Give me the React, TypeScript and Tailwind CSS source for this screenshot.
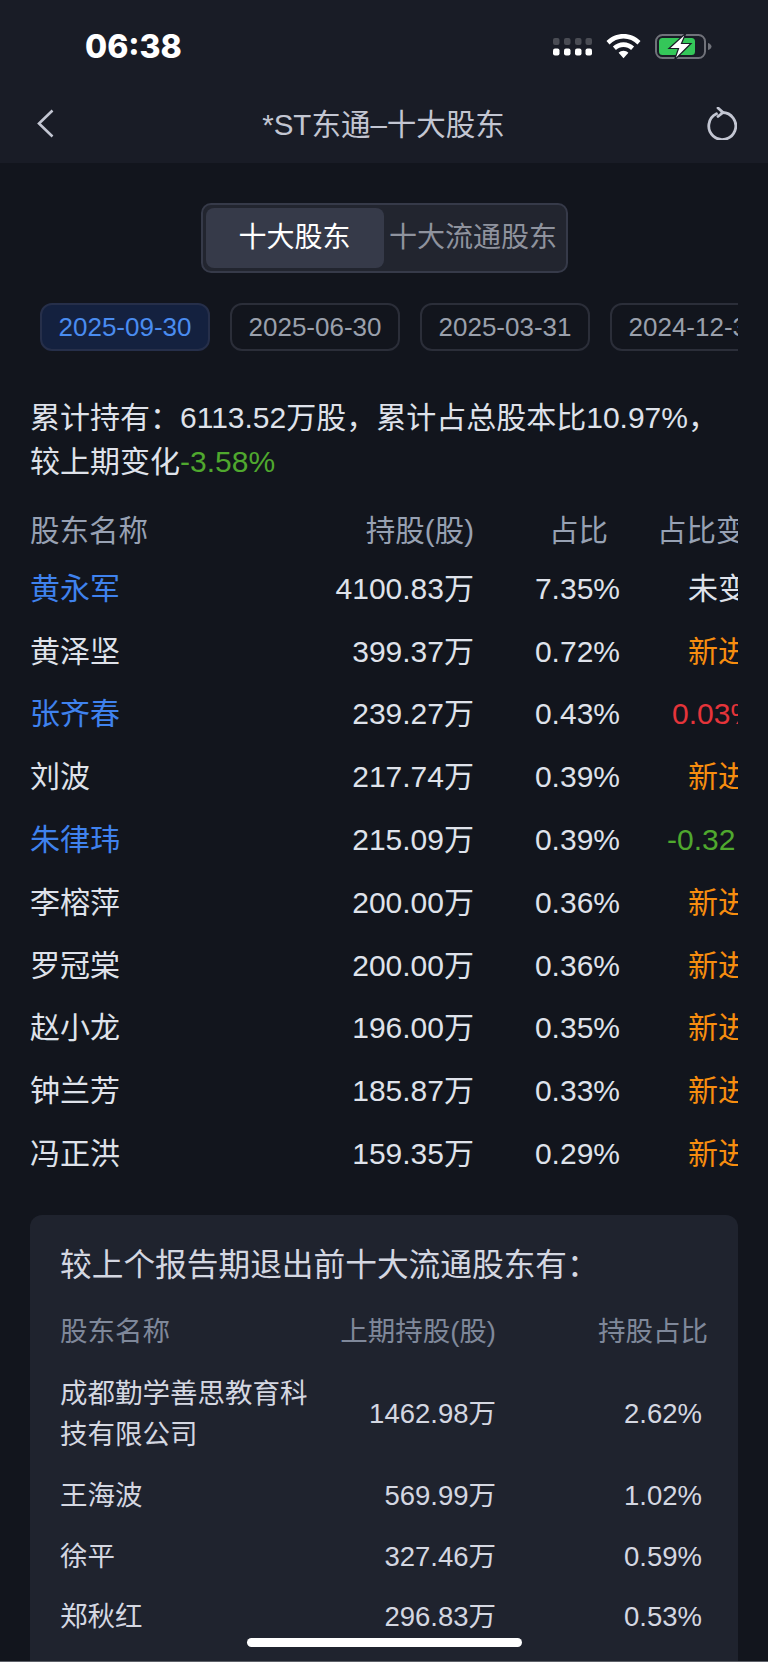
import React from 'react';

const holders = [
  { name: '黄永军', amount: '4100.83万', pct: '7.35%', change: '未变动', link: true, tone: 'text-[#dfe2ea] pl-[68px]' },
  { name: '黄泽坚', amount: '399.37万', pct: '0.72%', change: '新进入', link: false, tone: 'text-[#f78d0f] pl-[68px]' },
  { name: '张齐春', amount: '239.27万', pct: '0.43%', change: '0.03%', link: true, tone: 'text-[#e5343a] pl-[52px]' },
  { name: '刘波', amount: '217.74万', pct: '0.39%', change: '新进入', link: false, tone: 'text-[#f78d0f] pl-[68px]' },
  { name: '朱律玮', amount: '215.09万', pct: '0.39%', change: '-0.32 %', link: true, tone: 'text-[#4fa82e] pl-[47px]' },
  { name: '李榕萍', amount: '200.00万', pct: '0.36%', change: '新进入', link: false, tone: 'text-[#f78d0f] pl-[68px]' },
  { name: '罗冠棠', amount: '200.00万', pct: '0.36%', change: '新进入', link: false, tone: 'text-[#f78d0f] pl-[68px]' },
  { name: '赵小龙', amount: '196.00万', pct: '0.35%', change: '新进入', link: false, tone: 'text-[#f78d0f] pl-[68px]' },
  { name: '钟兰芳', amount: '185.87万', pct: '0.33%', change: '新进入', link: false, tone: 'text-[#f78d0f] pl-[68px]' },
  { name: '冯正洪', amount: '159.35万', pct: '0.29%', change: '新进入', link: false, tone: 'text-[#f78d0f] pl-[68px]' },
];

const exited = [
  { name: '王海波', amount: '569.99万', pct: '1.02%' },
  { name: '徐平', amount: '327.46万', pct: '0.59%' },
  { name: '郑秋红', amount: '296.83万', pct: '0.53%' },
];

const dates = ['2025-09-30', '2025-06-30', '2025-03-31', '2024-12-31'];

function StatusIcons() {
  return (
    <div className="flex items-center">
      <svg width="40" height="18" viewBox="0 0 40 18">
        <g fill="#4a4c54">
          <rect x="0" y="0" width="6.500" height="7" rx="2" />
          <rect x="11" y="0" width="6.500" height="7" rx="2" />
          <rect x="22" y="0" width="6.500" height="7" rx="2" />
          <rect x="32.500" y="0" width="6.500" height="7" rx="2" />
        </g>
        <g fill="#ffffff">
          <rect x="0" y="10.500" width="6.500" height="7" rx="2" />
          <rect x="11" y="10.500" width="6.500" height="7" rx="2" />
          <rect x="22" y="10.500" width="6.500" height="7" rx="2" />
          <rect x="32.500" y="10.500" width="6.500" height="7" rx="2" />
        </g>
      </svg>
      <svg className="ml-[13px]" width="35" height="25" viewBox="0 0 35 25">
        <path d="M17.500 0C11 0 5 2.600 0.500 7l3 3.500C7.200 6.800 12 4.600 17.500 4.600S27.800 6.800 31.500 10.500l3-3.500C30 2.600 24 0 17.500 0Z" fill="#fff" />
        <path d="M17.500 8.300c-4 0-7.800 1.600-10.600 4.300l3 3.400c2-1.900 4.700-3.100 7.600-3.100s5.600 1.200 7.600 3.100l3-3.400C25.300 9.900 21.500 8.300 17.500 8.300Z" fill="#fff" />
        <path d="M17.500 16.800c-1.900 0-3.600.8-4.900 2l4.900 5.400 4.900-5.400c-1.300-1.200-3-2-4.900-2Z" fill="#fff" />
      </svg>
      <svg className="ml-[14px]" width="57" height="27" viewBox="0 0 57 27">
        <rect x="1" y="2" width="49" height="23" rx="6.500" fill="none" stroke="#70727a" strokeWidth="2" />
        <path d="M53 10c2 .5 3.500 2 3.500 3.500s-1.500 3-3.500 3.500Z" fill="#70727a" />
        <rect x="4" y="5" width="36" height="17" rx="3.500" fill="#34c759" />
        <path d="M31 0 14 15.500h9.500L19.500 27l16.500-16.500H26.500L31 0Z" fill="#fff" stroke="#191c26" strokeWidth="1.200" />
      </svg>
    </div>
  );
}

export default function App() {
  return (
    <div
      className="relative flex h-[1662px] w-[768px] flex-col overflow-hidden bg-[#12151d] text-[30px] text-[#dfe2ea]"
      style={{ fontFamily: '"Liberation Sans", "Noto Sans CJK SC", sans-serif' }}
    >
      {/* Status bar + nav */}
      <header className="h-[163px] shrink-0 bg-[#191c26]">
        <div className="flex h-[92px] items-start justify-between pl-[85px] pr-[56px] pt-[26px]">
          <span className="text-[32px] font-extrabold leading-[41px] text-white" style={{ fontFamily: 'Inter, sans-serif' }}>06:38</span>
          <div className="pt-[7px]">
            <StatusIcons />
          </div>
        </div>
        <div className="flex h-[62px] items-center justify-between pl-[37px] pr-[31px]">
          <svg width="17" height="29" viewBox="0 0 17 29" fill="none" stroke="#c3c6d2" strokeWidth="2.600">
            <path d="M15.500 1.500 2 14.500l13.500 13" />
          </svg>
          <span className="ml-[6px] pt-[4px] text-[29.500px] text-[#c3c6d2]">*ST东通–十大股东</span>
          <svg width="30" height="33" viewBox="0 0 30 33" fill="none" stroke="#c3c6d2" strokeWidth="2.800" strokeLinecap="round">
            <path d="M9.500 6.800A13.500 13.500 0 1 0 15 5.500" />
            <path d="M11 1 16 5.500l-5 4" />
          </svg>
        </div>
      </header>

      {/* Tabs */}
      <div className="mt-[40px] flex justify-center">
        <div className="flex h-[70px] w-[367px] items-stretch rounded-[10px] border-2 border-[#363a49] bg-[#22252f] p-[3px]">
          <div className="flex w-[178px] items-center justify-center rounded-[8px] bg-[#363a49] text-[28px] text-white">十大股东</div>
          <div className="flex flex-1 items-center justify-center whitespace-nowrap text-[28px] text-[#8f939e]">十大流通股东</div>
        </div>
      </div>

      {/* Date pills */}
      <div className="ml-[40px] mt-[30px] flex w-[698px] gap-[20px] overflow-hidden">
        {dates.map((d, i) => (
          <div
            key={d}
            className={
              i === 0
                ? 'flex h-[48px] w-[170px] shrink-0 items-center justify-center rounded-[12px] border-2 border-[#262f4a] bg-[#14213f] text-[26px] text-[#4a8cf0]'
                : 'flex h-[48px] w-[170px] shrink-0 items-center justify-center rounded-[12px] border-2 border-[#2b2e39] text-[26px] text-[#9aa0ac]'
            }
          >
            {d}
          </div>
        ))}
      </div>

      {/* Summary */}
      <div className="ml-[30px] mt-[45px] w-[700px] leading-[44px]">
        <div className="whitespace-nowrap">累计持有：6113.52万股，累计占总股本比10.97%，</div>
        <div>
          较上期变化<span className="text-[#4fa82e]">-3.58%</span>
        </div>
      </div>

      {/* Top ten table */}
      <div className="ml-[30px] mt-[24px] w-[708px] overflow-hidden">
        <div className="flex h-[46px] items-center text-[29.500px] text-[#97a1b3]">
          <div className="w-[300px] shrink-0">股东名称</div>
          <div className="w-[144px] shrink-0 whitespace-nowrap text-right">持股(股)</div>
          <div className="w-[134px] shrink-0 text-right">占比</div>
          <div className="shrink-0 whitespace-nowrap pl-[49px]">占比变动</div>
        </div>
        <div className="mt-[3px]">
          {holders.map((h) => (
            <div key={h.name} className="flex h-[62.800px] items-center">
              <div className={h.link ? 'w-[300px] text-[#3f82ee]' : 'w-[300px] text-[#dfe2ea]'}>{h.name}</div>
              <div className="w-[144px] whitespace-nowrap text-right">{h.amount}</div>
              <div className="w-[146px] text-right">{h.pct}</div>
              <div className={`w-[118px] overflow-hidden whitespace-nowrap ${h.tone}`}>{h.change}</div>
            </div>
          ))}
        </div>
      </div>

      {/* Exited holders card */}
      <div className="ml-[30px] mt-[30px] w-[708px] flex-1 rounded-t-[12px] bg-[#1f232e] px-[30px] pt-[28px] text-[27.500px] text-[#d4d7e1]">
        <div className="whitespace-nowrap text-[31.700px] leading-[44px]">较上个报告期退出前十大流通股东有：</div>
        <div className="mt-[23px] flex h-[44px] items-center text-[#7f889a]">
          <div className="w-[252px] shrink-0">股东名称</div>
          <div className="w-[184px] shrink-0 whitespace-nowrap text-right">上期持股(股)</div>
          <div className="flex-1 text-right">持股占比</div>
        </div>
        <div className="mt-[19px]">
          <div className="flex items-center pb-[11px]">
            <div className="w-[252px] shrink-0 leading-[41px]">成都勤学善思教育科技有限公司</div>
            <div className="w-[184px] shrink-0 text-right">1462.98万</div>
            <div className="flex-1 pr-[6px] text-right">2.62%</div>
          </div>
          {exited.map((r) => (
            <div key={r.name} className="flex h-[60.200px] items-center">
              <div className="w-[252px] shrink-0">{r.name}</div>
              <div className="w-[184px] shrink-0 text-right">{r.amount}</div>
              <div className="flex-1 pr-[6px] text-right">{r.pct}</div>
            </div>
          ))}
        </div>
      </div>

      <div className="h-px shrink-0 bg-[#5d6068]" />

      {/* Home indicator */}
      <div className="absolute bottom-[15px] left-[247px] h-[9px] w-[275px] rounded-full bg-white" />
    </div>
  );
}
